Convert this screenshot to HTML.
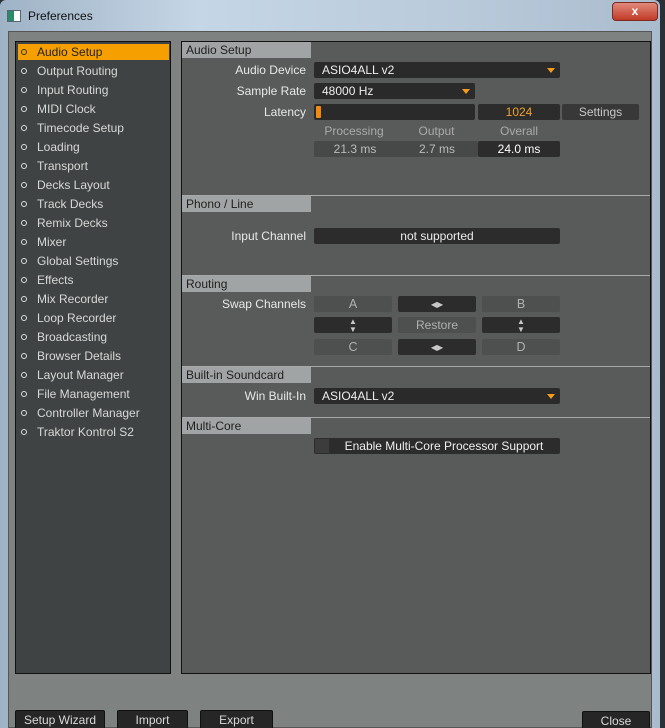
<!DOCTYPE html>
<html><head><style>
*{margin:0;padding:0;box-sizing:border-box}
html,body{width:665px;height:728px;overflow:hidden}
body{background:#2a3038;font-family:"Liberation Sans",sans-serif;position:relative}
.a{position:absolute}
.win{left:0;top:0;width:660px;height:728px;background:linear-gradient(90deg,#9fb3c6,#c5d6e6 30%,#b9cadb 70%,#a9bccd);border-radius:6px 6px 0 0}
.client{left:8px;top:31px;width:644px;height:697px;background:#7e8381;border:1px solid #555}
.left{left:15px;top:41px;width:156px;height:633px;background:#3f4343;border:1px solid #111}
.right{left:181px;top:41px;width:470px;height:633px;background:#595a5a;border:1px solid #111}
.it{left:18px;width:151px;height:16px;color:#d8d8d8;font-size:12px;line-height:17px;padding-left:19px}
.it::before{content:"";position:absolute;left:3px;top:5px;width:6px;height:6px;border-radius:50%;border:1.5px solid #ddd;box-sizing:border-box}
.it.sel{background:#f5a000;color:#222}
.it.sel::before{border-color:#333}
.hd{left:182px;width:129px;height:16px;background:#a1a4a4;color:#1f1f1f;font-size:12px;line-height:17px;padding-left:4px}
.sep{left:182px;width:468px;height:1px;background:#a8aaaa}
.lb{width:306px;left:0;text-align:right;color:#e8e8e8;font-size:12px;line-height:17px}
.dd{background:#2a2a2a;border-radius:2px;color:#eee;font-size:12px;line-height:17px;padding-left:8px;height:16px}
.dd .ar{position:absolute;right:5px;top:6px;border-left:4px solid transparent;border-right:4px solid transparent;border-top:5px solid #f59a1a}
.btn{background:#2c2c2c;border-radius:2px;color:#c8c8c8;font-size:12px;line-height:17px;text-align:center;height:16px}
.gb{background:#4e4f4f;border-radius:2px;color:#b0b0b0;font-size:12.5px;line-height:17px;text-align:center;height:16px}
.bb{background:#262626;border-radius:2px 2px 0 0;color:#d8d8d8;font-size:12px;text-align:center;line-height:19px;height:20px;border:1px solid #111}
</style></head><body>
<div class="a win"></div>
<div class="a" style="left:7px;top:10px;width:14px;height:12px;background:#fff;border:1px solid #567"><div style="width:6px;height:10px;background:#2a8a6a"></div></div>
<div class="a" style="left:28px;top:9px;font-size:12px;color:#111">Preferences</div>
<div class="a" style="left:612px;top:2px;width:46px;height:19px;background:linear-gradient(#e08a7c,#c23a26);border:1px solid #7a2a20;border-radius:4px;color:#fff;font-weight:bold;font-size:12px;text-align:center;line-height:17px">x</div>
<div class="a client"></div>
<div class="a left"></div>
<div class="a right"></div>

<div class="a it sel" style="top:44px">Audio Setup</div>
<div class="a it" style="top:63px">Output Routing</div>
<div class="a it" style="top:82px">Input Routing</div>
<div class="a it" style="top:101px">MIDI Clock</div>
<div class="a it" style="top:120px">Timecode Setup</div>
<div class="a it" style="top:139px">Loading</div>
<div class="a it" style="top:158px">Transport</div>
<div class="a it" style="top:177px">Decks Layout</div>
<div class="a it" style="top:196px">Track Decks</div>
<div class="a it" style="top:215px">Remix Decks</div>
<div class="a it" style="top:234px">Mixer</div>
<div class="a it" style="top:253px">Global Settings</div>
<div class="a it" style="top:272px">Effects</div>
<div class="a it" style="top:291px">Mix Recorder</div>
<div class="a it" style="top:310px">Loop Recorder</div>
<div class="a it" style="top:329px">Broadcasting</div>
<div class="a it" style="top:348px">Browser Details</div>
<div class="a it" style="top:367px">Layout Manager</div>
<div class="a it" style="top:386px">File Management</div>
<div class="a it" style="top:405px">Controller Manager</div>
<div class="a it" style="top:424px">Traktor Kontrol S2</div>

<div class="a hd" style="top:42px">Audio Setup</div>
<div class="a lb" style="top:62px">Audio Device</div>
<div class="a dd" style="left:314px;top:62px;width:246px">ASIO4ALL v2<span class="ar"></span></div>
<div class="a lb" style="top:83px">Sample Rate</div>
<div class="a dd" style="left:314px;top:83px;width:161px">48000 Hz<span class="ar"></span></div>
<div class="a lb" style="top:104px">Latency</div>
<div class="a dd" style="left:314px;top:104px;width:161px;padding:0"><div style="position:absolute;left:2px;top:2px;width:5px;height:12px;background:#f08a10;border-radius:1px"></div></div>
<div class="a btn" style="left:478px;top:104px;width:82px;color:#f0a030">1024</div>
<div class="a btn" style="left:562px;top:104px;width:77px;background:#383838">Settings</div>
<div class="a" style="left:314px;top:124px;width:80px;text-align:center;color:#aaa;font-size:12px">Processing</div>
<div class="a" style="left:398px;top:124px;width:77px;text-align:center;color:#aaa;font-size:12px">Output</div>
<div class="a" style="left:478px;top:124px;width:82px;text-align:center;color:#aaa;font-size:12px">Overall</div>
<div class="a gb" style="left:314px;top:141px;width:164px;background:#474848;color:#bbb;font-size:12px"><span style="position:absolute;left:0;width:82px">21.3 ms</span><span style="position:absolute;left:84px;width:78px">2.7 ms</span></div>
<div class="a btn" style="left:478px;top:141px;width:82px;color:#fff">24.0 ms</div>

<div class="a sep" style="top:195px"></div>
<div class="a hd" style="top:196px">Phono / Line</div>
<div class="a lb" style="top:228px">Input Channel</div>
<div class="a btn" style="left:314px;top:228px;width:246px;color:#eee">not supported</div>

<div class="a sep" style="top:275px"></div>
<div class="a hd" style="top:276px">Routing</div>
<div class="a lb" style="top:296px">Swap Channels</div>
<div class="a gb" style="left:314px;top:296px;width:78px">A</div>
<div class="a btn" style="left:398px;top:296px;width:78px;font-size:8px">◀▶</div>
<div class="a gb" style="left:482px;top:296px;width:78px">B</div>
<div class="a btn" style="left:314px;top:317px;width:78px;font-size:8px;line-height:8px;padding-top:1px">▲<br>▼</div>
<div class="a gb" style="left:398px;top:317px;width:78px;font-size:12px">Restore</div>
<div class="a btn" style="left:482px;top:317px;width:78px;font-size:8px;line-height:8px;padding-top:1px">▲<br>▼</div>
<div class="a gb" style="left:314px;top:339px;width:78px">C</div>
<div class="a btn" style="left:398px;top:339px;width:78px;font-size:8px">◀▶</div>
<div class="a gb" style="left:482px;top:339px;width:78px">D</div>

<div class="a sep" style="top:366px"></div>
<div class="a hd" style="top:367px">Built-in Soundcard</div>
<div class="a lb" style="top:388px">Win Built-In</div>
<div class="a dd" style="left:314px;top:388px;width:246px">ASIO4ALL v2<span class="ar"></span></div>

<div class="a sep" style="top:417px"></div>
<div class="a hd" style="top:418px">Multi-Core</div>
<div class="a btn" style="left:314px;top:438px;width:246px;color:#eee;padding-left:14px">Enable Multi-Core Processor Support<div style="position:absolute;left:1px;top:1px;width:14px;height:14px;background:#3c3c3c"></div></div>

<div class="a bb" style="left:15px;top:710px;width:90px">Setup Wizard</div>
<div class="a bb" style="left:117px;top:710px;width:71px">Import</div>
<div class="a bb" style="left:200px;top:710px;width:73px">Export</div>
<div class="a bb" style="left:582px;top:711px;width:68px">Close</div>
</body></html>
